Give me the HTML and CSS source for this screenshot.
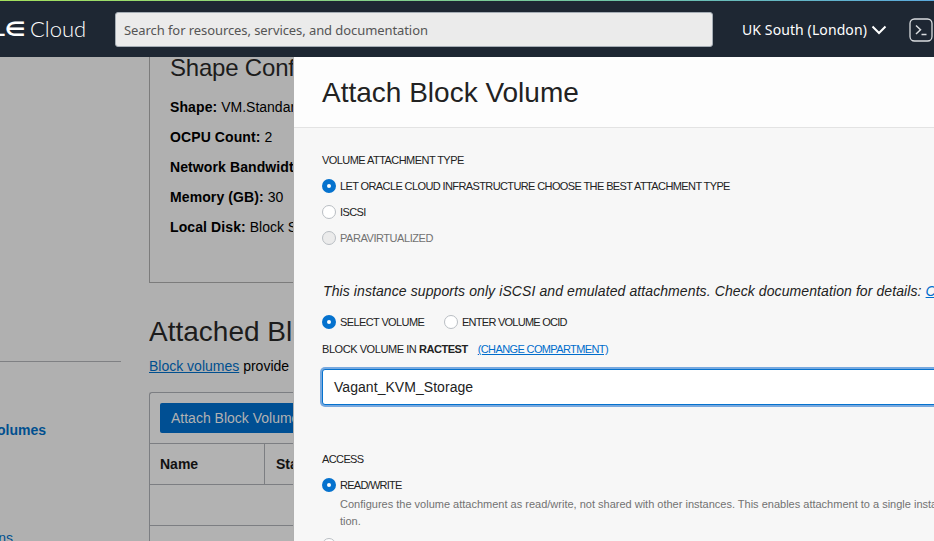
FILE: index.html
```html
<!DOCTYPE html>
<html lang="en">
<head>
<meta charset="utf-8">
<title>Attach Block Volume</title>
<link rel="stylesheet" href="styles.css">
</head>
<body>
<header class="topbar">
  <div class="brand"><span class="brand-l">L</span><span class="brand-e">∈</span><span class="brand-cloud">Cloud</span></div>
  <div class="search">Search for resources, services, and documentation</div>
  <div class="region">UK South (London)</div>
  <svg class="chevron" width="16" height="10" viewBox="0 0 16 10"><path d="M1.5 1.5 8 8l6.500-6.500" fill="none" stroke="#fff" stroke-width="2"/></svg>
  <svg class="shell" width="24" height="24" viewBox="0 0 24 24" fill="none" stroke="#d9dcdf"><rect x="1" y="1" width="22" height="22" rx="4.500" stroke-width="1.300"/><path d="M7 7.500l4.500 4.200L7 16M12.500 16.500h5" stroke-width="1.500"/></svg>
</header>
<div class="page">
  <aside class="sidebar">
    <div class="rule"></div>
    <div class="side-active"><span>Volumes</span></div>
    <div class="side-link"><span>ions</span></div>
  </aside>
  <main class="content">
    <section class="shape">
      <h2>Shape Conf</h2>
      <p><b>Shape:</b> VM.Standard</p>
      <p><b>OCPU Count:</b> 2</p>
      <p><b>Network Bandwidth</b></p>
      <p><b>Memory (GB):</b> 30</p>
      <p><b>Local Disk:</b> Block S</p>
    </section>
    <h1>Attached Blo</h1>
    <p class="intro"><a>Block volumes</a> provide</p>
    <section class="table">
      <div class="toolbar"><span class="button">Attach Block Volume</span></div>
      <div class="thead"><span>Name</span><span>State</span></div>
      <div class="trow"></div>
      <div class="trow"></div>
    </section>
  </main>
</div>
<section class="drawer">
  <div class="drawer-head"><h1>Attach Block Volume</h1></div>
  <div class="form">
    <div class="line type-label"><span>VOLUME ATTACHMENT TYPE</span></div>
    <div class="line"><i class="radio on"></i><span>LET ORACLE CLOUD INFRASTRUCTURE CHOOSE THE BEST ATTACHMENT TYPE</span></div>
    <div class="line"><i class="radio"></i><span>ISCSI</span></div>
    <div class="line muted"><i class="radio off"></i><span>PARAVIRTUALIZED</span></div>
    <p class="note">This instance supports only iSCSI and emulated attachments. Check documentation for details: <a>C</a></p>
    <div class="choices"><div class="line select"><i class="radio on"></i><span>SELECT VOLUME</span></div><div class="line ocid"><i class="radio"></i><span>ENTER VOLUME OCID</span></div></div>
    <div class="line volume"><span>BLOCK VOLUME IN <b>RACTEST</b></span><a>(CHANGE COMPARTMENT)</a></div>
    <div class="field">Vagant_KVM_Storage</div>
    <div class="line access"><span>ACCESS</span></div>
    <div class="line ocid"><i class="radio on"></i><span>READ/WRITE</span></div>
    <p class="help">Configures the volume attachment as read/write, not shared with other instances. This enables attachment to a single insta<br>tion.</p>
    <div class="line last"><i class="radio"></i></div>
  </div>
</section>
</body>
</html>
```
FILE: styles.css
```css
* { box-sizing: border-box; }
body { margin: 0; width: 934px; height: 541px; overflow: hidden; position: relative; background: #b0b0b0; font: 14px/20px "Liberation Sans", Arial, sans-serif; color: #000; }
h1, h2, p { margin: 0; font-weight: 400; }
.topbar { height: 57px; display: flex; align-items: center; background: linear-gradient(90deg, #a4e05c, #70c6a6 65%, #5aa9dd) top / 100% 1px no-repeat #1e2733; color: #fff; padding-top: 2px; }
.brand { width: 115px; display: flex; align-items: center; flex: none; overflow: hidden; height: 30px; }
.brand-l { font: bold 20px/30px "Liberation Sans", sans-serif; margin: -2px 0 0 -7px; width: 12px; }
.brand-e { font: bold 20px/30px "DejaVu Sans", sans-serif; width: 25px; transform: scaleX(1.16); transform-origin: 0 50%; margin-top: -1px; }
.brand-cloud { font: 300 22px/28px Lato, sans-serif; margin-top: -1px; }
.search { width: 598px; height: 35px; flex: none; border: 1px solid #a5adb5; border-radius: 3px; background: #ebebeb; color: #555; font: 13px/34px "Noto Sans", sans-serif; letter-spacing: -0.08px; padding-left: 8px; white-space: nowrap; }
.region { margin-left: 29px; width: 129px; font: 14px/20px "Noto Sans", sans-serif; letter-spacing: 0.1px; white-space: nowrap; }
.chevron { flex: none; }
.shell { flex: none; margin-left: 22px; }
.page { display: grid; grid-template-columns: 121px 144px; column-gap: 28px; width: 293px; height: 484px; overflow: hidden; }
.sidebar { padding-top: 304px; color: #004f8f; overflow: hidden; }
.rule { height: 1px; background: #7f8083; }
.side-active, .side-link { display: flex; justify-content: flex-end; white-space: nowrap; }
.side-active { font-weight: 700; margin-top: 58px; width: 46px; }
.side-link { margin-top: 88px; width: 13px; }
.content { white-space: nowrap; overflow: hidden; }
.shape { height: 226px; border: solid #7c7c7c; border-width: 0 0 1px 1px; padding-left: 20px; }
.shape h2 { height: 35px; font-size: 24px; line-height: 22px; letter-spacing: -0.2px; color: #1c1c1c; }
.shape p { height: 30px; line-height: 30px; }
.shape b { letter-spacing: 0.1px; }
.content h1 { margin-top: 32px; font-size: 28px; line-height: 33px; color: #1c1c1c; }
.intro { margin-top: 8px; line-height: 20px; }
a { color: #006dcc; text-decoration: underline; }
.intro a { color: #004f8f; }
.table { margin-top: 16px; border: solid #7c7e82; border-width: 1px 0 0 1px; border-radius: 3px 0 0; background: #b2b2b2; }
.toolbar { height: 50px; padding: 10px; }
.button { display: block; width: 154px; height: 30px; padding-left: 11px; border-radius: 2px; background: #004f93; color: #b2b2b2; line-height: 30px; }
.thead, .trow { height: 41px; border-top: 1px solid #7c7e82; }
.thead { display: grid; grid-template-columns: 114px 1fr; font-weight: 700; line-height: 40px; color: #111; }
.thead span { padding-left: 10px; }
.thead span + span { border-left: 1px solid #7c7e82; padding-left: 11px; }
.drawer { position: absolute; left: 294px; top: 57px; width: 640px; height: 484px; overflow: hidden; background: #f7f7f7; color: #222; }
.drawer-head { height: 71px; background: #fdfdfd; border-bottom: 1px solid #e3e3e3; padding: 19px 0 0 28px; }
.drawer-head h1 { font-size: 28px; line-height: 33px; }
.form { padding: 19px 0 0 28px; white-space: nowrap; }
.line { height: 26px; display: flex; align-items: center; font-size: 11px; letter-spacing: -0.61px; }
.radio { width: 14px; height: 14px; flex: none; margin-right: 4px; border: 1px solid #b9bec3; border-radius: 50%; background: #fff; }
.radio.on { border: 5px solid #0572ce; }
.radio.off { background: #ebebeb; }
.type-label { letter-spacing: -0.55px; }
.muted { color: #727272; letter-spacing: -0.45px; }
.ocid { letter-spacing: -0.74px; }
.note { margin: 30px 0 8px 1px; font-style: italic; line-height: 20px; letter-spacing: 0.095px; }
.choices { display: flex; height: 26px; }
.select { width: 122px; }
.volume { gap: 10px; height: 28px; letter-spacing: -0.44px; }
.volume a { letter-spacing: -0.62px; }
.field { margin: 6px -4px 0 0; height: 36px; border: 1px solid #0572ce; border-radius: 3px; box-shadow: 0 0 0 2px #78a9df; background: #fff; line-height: 34px; padding-left: 11px; letter-spacing: 0.05px; }
.access { margin-top: 41px; }
.help { margin: -2px 0 0 18px; font-size: 11px; line-height: 17px; color: #727272; }
.last { margin-top: 2px; }
```
